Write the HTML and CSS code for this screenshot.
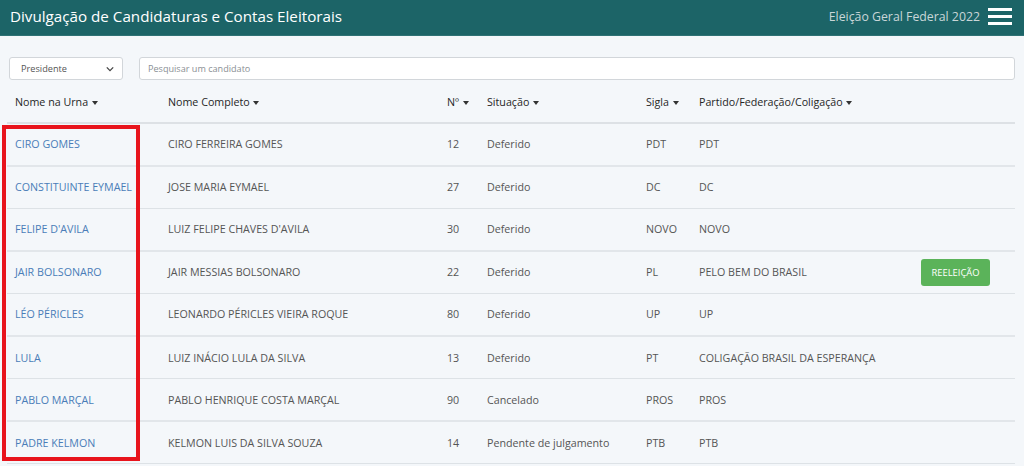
FILE: index.html
```html
<!DOCTYPE html>
<html lang="pt-BR">
<head>
<meta charset="utf-8">
<title>Divulgação de Candidaturas e Contas Eleitorais</title>
<link rel="stylesheet" href="styles.css">
</head>
<body>
<header class="topbar">
  <div class="brand">Divulgação de Candidaturas e Contas Eleitorais</div>
  <div class="right">
    <span class="election">Eleição Geral Federal 2022</span>
    <span class="burger"><i></i><i></i><i></i></span>
  </div>
</header>
<main class="content">
  <div class="filters">
    <div class="select">Presidente <svg class="chev" viewBox="0 0 10 6" width="8" height="6"><path d="M1 1 L5 5 L9 1" fill="none" stroke="#444" stroke-width="1.6"/></svg></div>
    <div class="search">Pesquisar um candidato</div>
  </div>
  <div class="table-wrap">
    <table class="grid">
      <colgroup>
        <col class="c1"><col class="c2"><col class="c3"><col class="c4"><col class="c5"><col class="c6"><col class="c7">
      </colgroup>
      <thead>
        <tr>
          <th>Nome na Urna <span class="caret"></span></th>
          <th>Nome Completo <span class="caret"></span></th>
          <th>Nº <span class="caret"></span></th>
          <th>Situação <span class="caret"></span></th>
          <th>Sigla <span class="caret"></span></th>
          <th>Partido/Federação/Coligação <span class="caret"></span></th>
          <th></th>
        </tr>
      </thead>
      <tbody>
        <tr><td><a>CIRO GOMES</a></td><td>CIRO FERREIRA GOMES</td><td>12</td><td>Deferido</td><td>PDT</td><td>PDT</td><td></td></tr>
        <tr><td><a>CONSTITUINTE EYMAEL</a></td><td>JOSE MARIA EYMAEL</td><td>27</td><td>Deferido</td><td>DC</td><td>DC</td><td></td></tr>
        <tr><td><a>FELIPE D'AVILA</a></td><td>LUIZ FELIPE CHAVES D'AVILA</td><td>30</td><td>Deferido</td><td>NOVO</td><td>NOVO</td><td></td></tr>
        <tr><td><a>JAIR BOLSONARO</a></td><td>JAIR MESSIAS BOLSONARO</td><td>22</td><td>Deferido</td><td>PL</td><td>PELO BEM DO BRASIL</td><td><span class="badge">REELEIÇÃO</span></td></tr>
        <tr><td><a>LÉO PÉRICLES</a></td><td>LEONARDO PÉRICLES VIEIRA ROQUE</td><td>80</td><td>Deferido</td><td>UP</td><td>UP</td><td></td></tr>
        <tr><td><a>LULA</a></td><td>LUIZ INÁCIO LULA DA SILVA</td><td>13</td><td>Deferido</td><td>PT</td><td>COLIGAÇÃO BRASIL DA ESPERANÇA</td><td></td></tr>
        <tr><td><a>PABLO MARÇAL</a></td><td>PABLO HENRIQUE COSTA MARÇAL</td><td>90</td><td>Cancelado</td><td>PROS</td><td>PROS</td><td></td></tr>
        <tr><td><a>PADRE KELMON</a></td><td>KELMON LUIS DA SILVA SOUZA</td><td>14</td><td>Pendente de julgamento</td><td>PTB</td><td>PTB</td><td></td></tr>
      </tbody>
    </table>
    <div class="highlight"></div>
  </div>
</main>
</body>
</html>
```
FILE: styles.css
```css
* { box-sizing: border-box; }
html, body { margin: 0; padding: 0; }
body {
  background: #f4f7fa;
  font-family: "Open Sans", "Noto Sans", sans-serif;
  color: #555;
  font-size: 10.7px;
  width: 1024px;
  height: 466px;
  overflow: hidden;
}
.topbar {
  height: 36px;
  background: #1c6467;
  border-bottom: 1px solid #2f7275;
  display: flex;
  align-items: center;
  justify-content: space-between;
  padding: 0 12px 0 10px;
}
.brand {
  color: #fff;
  font-size: 15.2px;
  margin-top: -3px;
}
.right { display: flex; align-items: center; gap: 8px; }
.election { color: #c9d6d8; font-size: 12.3px; margin-top: -2px; }
.burger {
  display: flex; flex-direction: column; gap: 4px; width: 24px; margin-top: -2px;
}
.burger i { display: block; height: 3px; background: #fff; }
.content { padding: 21px 9px 0 7px; }
.filters { display: flex; gap: 16px; padding-left: 2px; }
.select {
  width: 114px; height: 23px;
  background: #fff;
  border: 1px solid #d2d6da;
  border-radius: 3px;
  font-size: 9.2px;
  color: #555;
  display: flex; align-items: center; justify-content: space-between;
  padding: 0 8px 0 11px;
}
.search {
  flex: 1; height: 23px;
  background: #fff;
  border: 1px solid #d2d6da;
  border-radius: 3px;
  font-size: 9.1px;
  color: #8a8f94;
  display: flex; align-items: center;
  padding: 0 8px;
}
.table-wrap { position: relative; margin-top: 2px; }
.grid {
  width: 1008px;
  border-collapse: collapse;
  table-layout: fixed;
}
.c1 { width: 153px; } .c2 { width: 279px; } .c3 { width: 40px; }
.c4 { width: 159px; } .c5 { width: 53px; } .c6 { width: 222px; } .c7 { width: 102px; }
.grid th {
  text-align: left;
  font-weight: 500;
  color: #262626;
  font-size: 10.7px;
  height: 41px;
  padding: 0 8px;
  border-bottom: 2px solid #dde1e5;
  white-space: nowrap;
}
.grid td {
  height: 42.6px;
  padding: 0 8px;
  border-bottom: 1px solid #dde2e6;
  white-space: nowrap;
  color: #555;
}
.grid tbody tr:nth-child(odd) td { border-bottom-width: 2px; border-bottom-color: #e2e6ea; }
.grid a { color: #4a7db8; text-decoration: none; }
.caret {
  display: inline-block;
  width: 0; height: 0;
  border-left: 3.5px solid transparent;
  border-right: 3.5px solid transparent;
  border-top: 4px solid #333;
  vertical-align: middle;
  margin-left: 1px;
}
.badge {
  display: inline-flex; align-items: center; justify-content: center;
  width: 69px; height: 27px;
  background: #5bb35a;
  color: #fff;
  border-radius: 3px;
  font-size: 9.4px;
}
.highlight {
  position: absolute;
  left: -5px; top: 43px;
  width: 138px; height: 336px;
  border: 4px solid #e8141c;
  pointer-events: none;
}
```
